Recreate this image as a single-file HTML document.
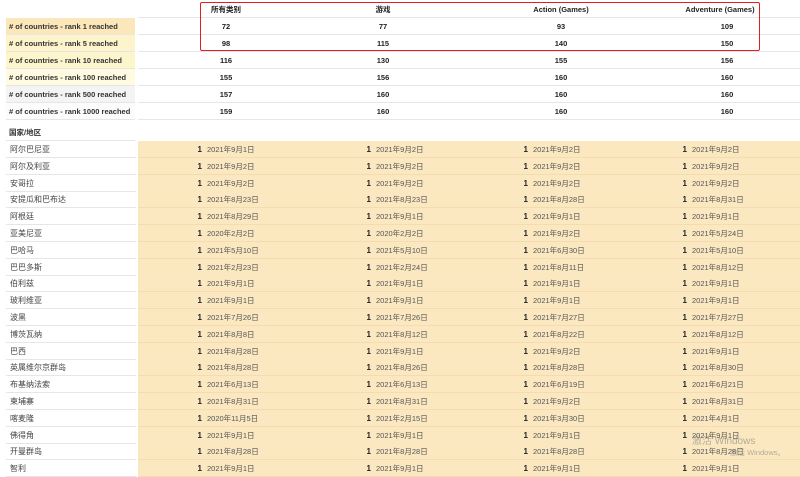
<!DOCTYPE html>
<html><head><meta charset="utf-8"><style>
body{margin:0;width:800px;height:477px;overflow:hidden;background:#fff;font-family:"Liberation Sans","Noto Sans CJK SC",sans-serif;position:relative}
.r{position:absolute;left:0;width:800px;height:17px;font-size:8px;line-height:17px;color:#333}
.n{position:absolute;left:6px;width:126px;padding-left:4px;height:16px;border-bottom:1px solid #e6e6e6;color:#444}
.y{position:absolute;left:138px;right:0;height:16px;background:#fbe8c0;border-bottom:1px solid #f3ddb0}
.o{position:absolute;font-weight:bold;color:#222;width:10px;text-align:right}
.d{position:absolute;font-size:7.5px;color:#555}
.h{position:absolute;font-size:7.5px;font-weight:bold;color:#222;transform:translateX(-50%);line-height:17px}
.t{position:absolute;left:6px;width:126px;padding-left:3px;height:16px;border-bottom:1px solid #e6e6e6;font-weight:bold;color:#333;font-size:7.5px}
.line{position:absolute;left:138px;right:0;height:16px;border-bottom:1px solid #e6e6e6}
</style></head><body>
<div class="r" style="top:1px"><div class="line" style="left:138px"></div>
<span class="h" style="left:226px">所有类别</span><span class="h" style="left:383px">游戏</span><span class="h" style="left:561px">Action (Games)</span><span class="h" style="left:720px">Adventure (Games)</span></div>
<div class="r" style="top:18px"><div class="t" style="background:#fbe7b9"># of countries - rank 1 reached</div><div class="line"></div><span class="h" style="left:226px">72</span><span class="h" style="left:383px">77</span><span class="h" style="left:561px">93</span><span class="h" style="left:727px">109</span></div>
<div class="r" style="top:35px"><div class="t" style="background:#fdf4cb"># of countries - rank 5 reached</div><div class="line"></div><span class="h" style="left:226px">98</span><span class="h" style="left:383px">115</span><span class="h" style="left:561px">140</span><span class="h" style="left:727px">150</span></div>
<div class="r" style="top:52px"><div class="t" style="background:#fdf6cc"># of countries - rank 10 reached</div><div class="line"></div><span class="h" style="left:226px">116</span><span class="h" style="left:383px">130</span><span class="h" style="left:561px">155</span><span class="h" style="left:727px">156</span></div>
<div class="r" style="top:69px"><div class="t" style="background:#fefbe0"># of countries - rank 100 reached</div><div class="line"></div><span class="h" style="left:226px">155</span><span class="h" style="left:383px">156</span><span class="h" style="left:561px">160</span><span class="h" style="left:727px">160</span></div>
<div class="r" style="top:86px"><div class="t" style="background:#f4f4f4"># of countries - rank 500 reached</div><div class="line"></div><span class="h" style="left:226px">157</span><span class="h" style="left:383px">160</span><span class="h" style="left:561px">160</span><span class="h" style="left:727px">160</span></div>
<div class="r" style="top:103px"><div class="t" style="background:#fcfcfc"># of countries - rank 1000 reached</div><div class="line"></div><span class="h" style="left:226px">159</span><span class="h" style="left:383px">160</span><span class="h" style="left:561px">160</span><span class="h" style="left:727px">160</span></div>
<div style="position:absolute;left:200px;top:2px;width:558px;height:47px;border:1.5px solid #e02020;border-radius:2px"></div>
<div class="r" style="top:124px"><div class="t">国家/地区</div></div>

<div class="r" style="top:141px"><div class="n">阿尔巴尼亚</div><div class="y"></div><span class="o" style="left:192px">1</span><span class="d" style="left:207px">2021年9月1日</span><span class="o" style="left:361px">1</span><span class="d" style="left:376px">2021年9月2日</span><span class="o" style="left:518px">1</span><span class="d" style="left:533px">2021年9月2日</span><span class="o" style="left:677px">1</span><span class="d" style="left:692px">2021年9月2日</span></div>
<div class="r" style="top:158px"><div class="n">阿尔及利亚</div><div class="y"></div><span class="o" style="left:192px">1</span><span class="d" style="left:207px">2021年9月2日</span><span class="o" style="left:361px">1</span><span class="d" style="left:376px">2021年9月2日</span><span class="o" style="left:518px">1</span><span class="d" style="left:533px">2021年9月2日</span><span class="o" style="left:677px">1</span><span class="d" style="left:692px">2021年9月2日</span></div>
<div class="r" style="top:175px"><div class="n">安哥拉</div><div class="y"></div><span class="o" style="left:192px">1</span><span class="d" style="left:207px">2021年9月2日</span><span class="o" style="left:361px">1</span><span class="d" style="left:376px">2021年9月2日</span><span class="o" style="left:518px">1</span><span class="d" style="left:533px">2021年9月2日</span><span class="o" style="left:677px">1</span><span class="d" style="left:692px">2021年9月2日</span></div>
<div class="r" style="top:191px"><div class="n">安提瓜和巴布达</div><div class="y"></div><span class="o" style="left:192px">1</span><span class="d" style="left:207px">2021年8月23日</span><span class="o" style="left:361px">1</span><span class="d" style="left:376px">2021年8月23日</span><span class="o" style="left:518px">1</span><span class="d" style="left:533px">2021年8月28日</span><span class="o" style="left:677px">1</span><span class="d" style="left:692px">2021年8月31日</span></div>
<div class="r" style="top:208px"><div class="n">阿根廷</div><div class="y"></div><span class="o" style="left:192px">1</span><span class="d" style="left:207px">2021年8月29日</span><span class="o" style="left:361px">1</span><span class="d" style="left:376px">2021年9月1日</span><span class="o" style="left:518px">1</span><span class="d" style="left:533px">2021年9月1日</span><span class="o" style="left:677px">1</span><span class="d" style="left:692px">2021年9月1日</span></div>
<div class="r" style="top:225px"><div class="n">亚美尼亚</div><div class="y"></div><span class="o" style="left:192px">1</span><span class="d" style="left:207px">2020年2月2日</span><span class="o" style="left:361px">1</span><span class="d" style="left:376px">2020年2月2日</span><span class="o" style="left:518px">1</span><span class="d" style="left:533px">2021年9月2日</span><span class="o" style="left:677px">1</span><span class="d" style="left:692px">2021年5月24日</span></div>
<div class="r" style="top:242px"><div class="n">巴哈马</div><div class="y"></div><span class="o" style="left:192px">1</span><span class="d" style="left:207px">2021年5月10日</span><span class="o" style="left:361px">1</span><span class="d" style="left:376px">2021年5月10日</span><span class="o" style="left:518px">1</span><span class="d" style="left:533px">2021年6月30日</span><span class="o" style="left:677px">1</span><span class="d" style="left:692px">2021年5月10日</span></div>
<div class="r" style="top:259px"><div class="n">巴巴多斯</div><div class="y"></div><span class="o" style="left:192px">1</span><span class="d" style="left:207px">2021年2月23日</span><span class="o" style="left:361px">1</span><span class="d" style="left:376px">2021年2月24日</span><span class="o" style="left:518px">1</span><span class="d" style="left:533px">2021年8月11日</span><span class="o" style="left:677px">1</span><span class="d" style="left:692px">2021年8月12日</span></div>
<div class="r" style="top:275px"><div class="n">伯利兹</div><div class="y"></div><span class="o" style="left:192px">1</span><span class="d" style="left:207px">2021年9月1日</span><span class="o" style="left:361px">1</span><span class="d" style="left:376px">2021年9月1日</span><span class="o" style="left:518px">1</span><span class="d" style="left:533px">2021年9月1日</span><span class="o" style="left:677px">1</span><span class="d" style="left:692px">2021年9月1日</span></div>
<div class="r" style="top:292px"><div class="n">玻利维亚</div><div class="y"></div><span class="o" style="left:192px">1</span><span class="d" style="left:207px">2021年9月1日</span><span class="o" style="left:361px">1</span><span class="d" style="left:376px">2021年9月1日</span><span class="o" style="left:518px">1</span><span class="d" style="left:533px">2021年9月1日</span><span class="o" style="left:677px">1</span><span class="d" style="left:692px">2021年9月1日</span></div>
<div class="r" style="top:309px"><div class="n">波黑</div><div class="y"></div><span class="o" style="left:192px">1</span><span class="d" style="left:207px">2021年7月26日</span><span class="o" style="left:361px">1</span><span class="d" style="left:376px">2021年7月26日</span><span class="o" style="left:518px">1</span><span class="d" style="left:533px">2021年7月27日</span><span class="o" style="left:677px">1</span><span class="d" style="left:692px">2021年7月27日</span></div>
<div class="r" style="top:326px"><div class="n">博茨瓦纳</div><div class="y"></div><span class="o" style="left:192px">1</span><span class="d" style="left:207px">2021年8月8日</span><span class="o" style="left:361px">1</span><span class="d" style="left:376px">2021年8月12日</span><span class="o" style="left:518px">1</span><span class="d" style="left:533px">2021年8月22日</span><span class="o" style="left:677px">1</span><span class="d" style="left:692px">2021年8月12日</span></div>
<div class="r" style="top:343px"><div class="n">巴西</div><div class="y"></div><span class="o" style="left:192px">1</span><span class="d" style="left:207px">2021年8月28日</span><span class="o" style="left:361px">1</span><span class="d" style="left:376px">2021年9月1日</span><span class="o" style="left:518px">1</span><span class="d" style="left:533px">2021年9月2日</span><span class="o" style="left:677px">1</span><span class="d" style="left:692px">2021年9月1日</span></div>
<div class="r" style="top:359px"><div class="n">英属维尔京群岛</div><div class="y"></div><span class="o" style="left:192px">1</span><span class="d" style="left:207px">2021年8月28日</span><span class="o" style="left:361px">1</span><span class="d" style="left:376px">2021年8月26日</span><span class="o" style="left:518px">1</span><span class="d" style="left:533px">2021年8月28日</span><span class="o" style="left:677px">1</span><span class="d" style="left:692px">2021年8月30日</span></div>
<div class="r" style="top:376px"><div class="n">布基纳法索</div><div class="y"></div><span class="o" style="left:192px">1</span><span class="d" style="left:207px">2021年6月13日</span><span class="o" style="left:361px">1</span><span class="d" style="left:376px">2021年6月13日</span><span class="o" style="left:518px">1</span><span class="d" style="left:533px">2021年6月19日</span><span class="o" style="left:677px">1</span><span class="d" style="left:692px">2021年6月21日</span></div>
<div class="r" style="top:393px"><div class="n">柬埔寨</div><div class="y"></div><span class="o" style="left:192px">1</span><span class="d" style="left:207px">2021年8月31日</span><span class="o" style="left:361px">1</span><span class="d" style="left:376px">2021年8月31日</span><span class="o" style="left:518px">1</span><span class="d" style="left:533px">2021年9月2日</span><span class="o" style="left:677px">1</span><span class="d" style="left:692px">2021年8月31日</span></div>
<div class="r" style="top:410px"><div class="n">喀麦隆</div><div class="y"></div><span class="o" style="left:192px">1</span><span class="d" style="left:207px">2020年11月5日</span><span class="o" style="left:361px">1</span><span class="d" style="left:376px">2021年2月15日</span><span class="o" style="left:518px">1</span><span class="d" style="left:533px">2021年3月30日</span><span class="o" style="left:677px">1</span><span class="d" style="left:692px">2021年4月1日</span></div>
<div class="r" style="top:427px"><div class="n">佛得角</div><div class="y"></div><span class="o" style="left:192px">1</span><span class="d" style="left:207px">2021年9月1日</span><span class="o" style="left:361px">1</span><span class="d" style="left:376px">2021年9月1日</span><span class="o" style="left:518px">1</span><span class="d" style="left:533px">2021年9月1日</span><span class="o" style="left:677px">1</span><span class="d" style="left:692px">2021年9月1日</span></div>
<div class="r" style="top:443px"><div class="n">开曼群岛</div><div class="y"></div><span class="o" style="left:192px">1</span><span class="d" style="left:207px">2021年8月28日</span><span class="o" style="left:361px">1</span><span class="d" style="left:376px">2021年8月28日</span><span class="o" style="left:518px">1</span><span class="d" style="left:533px">2021年8月28日</span><span class="o" style="left:677px">1</span><span class="d" style="left:692px">2021年8月28日</span></div>
<div class="r" style="top:460px"><div class="n">智利</div><div class="y"></div><span class="o" style="left:192px">1</span><span class="d" style="left:207px">2021年9月1日</span><span class="o" style="left:361px">1</span><span class="d" style="left:376px">2021年9月1日</span><span class="o" style="left:518px">1</span><span class="d" style="left:533px">2021年9月1日</span><span class="o" style="left:677px">1</span><span class="d" style="left:692px">2021年9月1日</span></div>
<div style="position:absolute;left:692px;top:432px;font-size:10px;color:rgba(120,120,120,.55)">激活 Windows</div>
<div style="position:absolute;left:730px;top:447px;font-size:7.5px;color:rgba(120,120,120,.55)">激活 Windows。</div>
</body></html>
